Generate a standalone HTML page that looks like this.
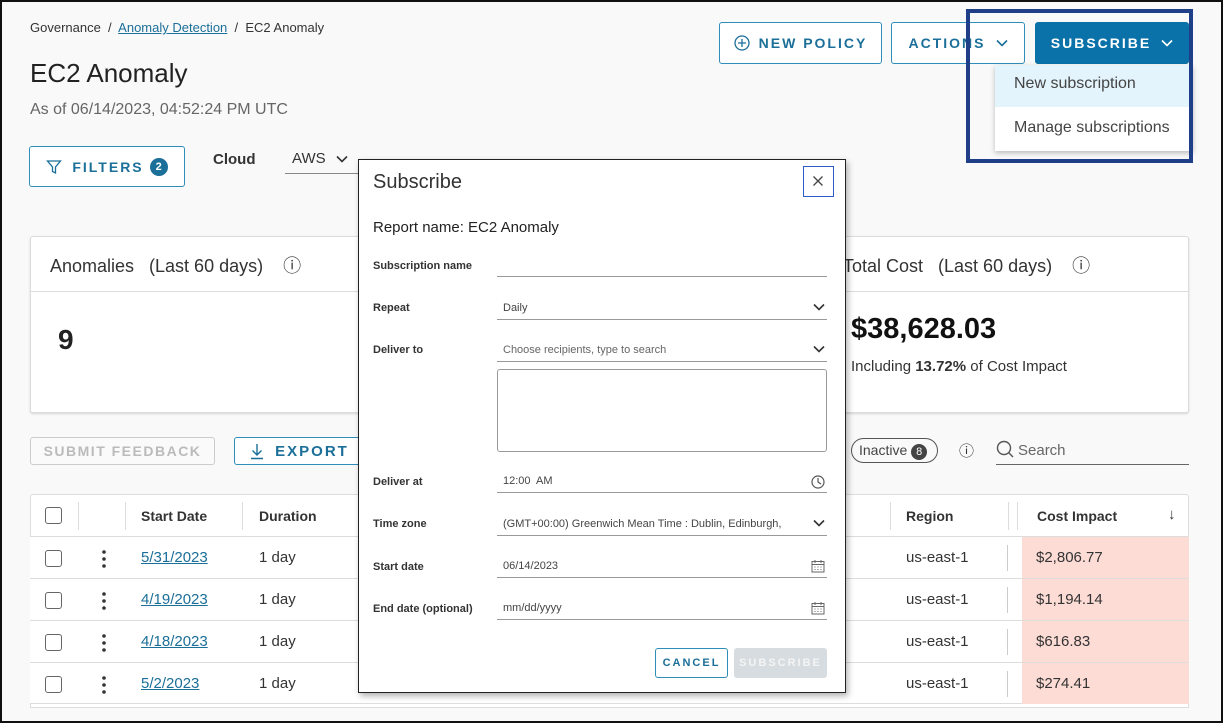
<!DOCTYPE html>
<html><head><meta charset="utf-8"><style>
*{box-sizing:border-box;margin:0;padding:0}
body{width:1228px;height:727px;background:#fff;font-family:"Liberation Sans",sans-serif;color:#333;position:relative;overflow:hidden}
.a{position:absolute}
.frame{left:0;top:0;width:1223px;height:723px;border:2px solid #111;background:#f9f9f9}
.btn{position:absolute;border:1px solid #2f8dba;border-radius:3px;color:#1b6f99;font-weight:bold;letter-spacing:2px;font-size:14px;display:flex;align-items:center;justify-content:center;background:#fff}
.lbl{position:absolute;left:373px;font-size:11px;font-weight:bold;color:#333}
.inp{position:absolute;left:497px;width:330px;border-bottom:1px solid #999;font-size:11px;color:#444;height:22px;padding-left:6px;line-height:20px}
.chev{position:absolute;right:2px;top:5px}
.cb{position:absolute;width:17px;height:17px;border:1.5px solid #666;border-radius:3px;left:45px;background:#fff}
.row{position:absolute;left:30px;width:1159px;height:42px;border-top:1px solid #ddd;background:#fff}
.row .dots{position:absolute;left:72px;top:13px}
.row .d{position:absolute;left:111px;top:12px;font-size:15px;color:#1b6f99;text-decoration:underline}
.row .du{position:absolute;left:229px;top:12px;font-size:15px}
.row .r{position:absolute;left:876px;top:12px;font-size:15px}
.row .c{position:absolute;left:992px;top:0;width:167px;height:41px;background:#fddcd6;padding:12px 0 0 14px;font-size:15px}
.row .sep{position:absolute;left:977px;top:8px;height:26px;border-left:1px solid #ccc}
.th{position:absolute;top:508px;font-size:14px;font-weight:bold;color:#333}
</style></head><body>
<svg width="0" height="0" style="position:absolute"><defs>
<symbol id="cv" viewBox="0 0 12 8"><path d="M1 1.5 L6 6.5 L11 1.5" fill="none" stroke="currentColor" stroke-width="1.6"/></symbol>
<symbol id="cal" viewBox="0 0 14 14"><rect x="1" y="2.5" width="12" height="10.5" fill="none" stroke="#666"/><path d="M1 5.5H13M4 1v3M10 1v3M3.5 8h1M6.5 8h1M9.5 8h1M3.5 10.5h1M6.5 10.5h1M9.5 10.5h1" stroke="#666"/></symbol>
<symbol id="dots" viewBox="0 0 4 18"><circle cx="2" cy="2" r="1.8" fill="#333"/><circle cx="2" cy="9" r="1.8" fill="#333"/><circle cx="2" cy="16" r="1.8" fill="#333"/></symbol>
</defs></svg>
<div class="a frame"></div>
<div class="a" style="left:30px;top:20px;font-size:13px;color:#333">Governance &nbsp;/&nbsp; <span style="color:#1b6f99;text-decoration:underline">Anomaly Detection</span> &nbsp;/&nbsp; EC2 Anomaly</div>
<div class="a" style="left:30px;top:58px;font-size:26px;color:#222">EC2 Anomaly</div>
<div class="a" style="left:30px;top:101px;font-size:16px;color:#666">As of 06/14/2023, 04:52:24 PM UTC</div>
<div class="btn" style="left:29px;top:146px;width:156px;height:41px;border-width:1.5px"><svg width="16" height="16" viewBox="0 0 16 16" style="margin-right:10px"><path d="M1.5 2H14.5L9.5 8V14L6.5 12.5V8Z" fill="none" stroke="#1b6f99" stroke-width="1.3"/></svg>FILTERS <span style="display:inline-block;width:18px;height:18px;border-radius:9px;background:#1b6f99;color:#fff;font-size:11px;letter-spacing:0;text-align:center;line-height:18px;margin-left:6px">2</span></div>
<div class="a" style="left:213px;top:151px;font-size:15px;font-weight:bold">Cloud</div>
<div class="a" style="left:285px;top:150px;width:80px;border-bottom:1px solid #888;font-size:15px;padding:0 0 6px 7px">AWS <svg width="12" height="8" style="margin-left:6px;color:#333"><use href="#cv"/></svg></div>

<div class="btn" style="left:719px;top:22px;width:163px;height:42px"><svg width="16" height="16" viewBox="0 0 16 16" style="margin-right:9px"><circle cx="8" cy="8" r="7" fill="none" stroke="#1b6f99" stroke-width="1.3"/><path d="M8 4V12M4 8H12" stroke="#1b6f99" stroke-width="1.3"/></svg>NEW POLICY</div>
<div class="btn" style="left:891px;top:22px;width:134px;height:42px">ACTIONS <svg width="12" height="8" style="margin-left:10px;color:#1b6f99"><use href="#cv"/></svg></div>
<div class="btn" style="left:1035px;top:22px;width:154px;height:42px;background:#0a72a8;color:#fff;border-color:#0a72a8">SUBSCRIBE <svg width="12" height="8" style="margin-left:10px;color:#fff"><use href="#cv"/></svg></div>
<div class="a" style="left:995px;top:65px;width:198px;height:86px;background:#fff;box-shadow:0 2px 5px rgba(0,0,0,.25)"></div>
<div class="a" style="left:995px;top:65px;width:194px;height:42px;background:#e3f4fc"></div>
<div class="a" style="left:1014px;top:75px;font-size:16px;color:#444">New subscription</div>
<div class="a" style="left:1014px;top:119px;font-size:16px;color:#444">Manage subscriptions</div>
<div class="a" style="left:966px;top:9px;width:227px;height:154px;border:4px solid #1f3f88"></div>

<div class="a" style="left:30px;top:236px;width:1159px;height:177px;background:#fff;border:1px solid #ddd;border-radius:3px;box-shadow:0 1px 2px rgba(0,0,0,.15)"></div>
<div class="a" style="left:30px;top:291px;width:1159px;border-top:1px solid #ddd"></div>
<div class="a" style="left:50px;top:252px;font-size:18px;color:#333">Anomalies &nbsp;&nbsp;(Last 60 days) &nbsp;&nbsp;&nbsp;ⓘ</div>
<div class="a" style="left:58px;top:324px;font-size:28px;font-weight:bold;color:#222">9</div>
<div class="a" style="left:843px;top:252px;font-size:18px;color:#333">Total Cost &nbsp;&nbsp;(Last 60 days) &nbsp;&nbsp;&nbsp;ⓘ</div>
<div class="a" style="left:851px;top:313px;font-size:29px;font-weight:bold;color:#111">$38,628.03</div>
<div class="a" style="left:851px;top:358px;font-size:15px;color:#333">Including <b>13.72%</b> of Cost Impact</div>

<div class="btn" style="left:30px;top:437px;width:185px;height:28px;color:#bbb;border-color:#ccc;background:#fafafa;font-size:14px;letter-spacing:1.5px">SUBMIT FEEDBACK</div>
<div class="btn" style="left:234px;top:437px;width:130px;height:28px;font-size:15px"><svg width="16" height="18" viewBox="0 0 16 18" style="margin-right:10px"><path d="M8 2V13M3.5 8.5L8 13L12.5 8.5M2 16.5H14" fill="none" stroke="#1b6f99" stroke-width="1.4"/></svg>EXPORT</div>
<div class="a" style="left:851px;top:438px;width:87px;height:25px;border:1.5px solid #555;border-radius:13px;font-size:14px;padding:3px 0 0 7px;color:#444">Inactive <span style="display:inline-block;width:16px;height:16px;border-radius:8px;background:#444;color:#fff;font-size:11px;text-align:center;line-height:16px">8</span></div>
<div class="a" style="left:959px;top:440px;font-size:15px">ⓘ</div>
<div class="a" style="left:996px;top:440px;width:193px;height:25px;border-bottom:1.5px solid #666;font-size:15px;color:#666"><svg width="18" height="18" viewBox="0 0 18 18" style="vertical-align:-3px;margin-right:4px"><circle cx="8" cy="8" r="6.5" fill="none" stroke="#555" stroke-width="1.4"/><path d="M12.5 12.5L17 17" stroke="#555" stroke-width="1.4"/></svg>Search</div>

<div class="a" style="left:30px;top:494px;width:1159px;height:214px;background:#fff;border:1px solid #ddd;border-radius:3px 3px 0 0"></div>
<div class="cb" style="top:507px"></div>
<div class="a" style="left:78px;top:502px;height:28px;border-left:1px solid #ddd"></div>
<div class="a" style="left:125px;top:502px;height:28px;border-left:1px solid #ddd"></div>
<div class="a" style="left:242px;top:502px;height:28px;border-left:1px solid #ddd"></div>
<div class="a" style="left:890px;top:502px;height:28px;border-left:1px solid #ddd"></div>
<div class="a" style="left:1008px;top:502px;height:28px;border-left:1px solid #ddd"></div>
<div class="a" style="left:1017px;top:502px;height:28px;border-left:1px solid #ddd"></div>
<div class="th" style="left:141px">Start Date</div>
<div class="th" style="left:259px">Duration</div>
<div class="th" style="left:906px">Region</div>
<div class="th" style="left:1037px">Cost Impact</div>
<div class="a" style="left:1168px;top:506px;font-size:15px">↓</div>

<div class="row" style="top:536px"><div class="cb" style="left:15px;top:13px"></div><svg class="dots" width="4" height="18"><use href="#dots"/></svg><div class="d">5/31/2023</div><div class="du">1 day</div><div class="r">us-east-1</div><div class="sep"></div><div class="c">$2,806.77</div></div>
<div class="row" style="top:578px"><div class="cb" style="left:15px;top:13px"></div><svg class="dots" width="4" height="18"><use href="#dots"/></svg><div class="d">4/19/2023</div><div class="du">1 day</div><div class="r">us-east-1</div><div class="sep"></div><div class="c">$1,194.14</div></div>
<div class="row" style="top:620px"><div class="cb" style="left:15px;top:13px"></div><svg class="dots" width="4" height="18"><use href="#dots"/></svg><div class="d">4/18/2023</div><div class="du">1 day</div><div class="r">us-east-1</div><div class="sep"></div><div class="c">$616.83</div></div>
<div class="row" style="top:662px;border-bottom:1px solid #ddd"><div class="cb" style="left:15px;top:13px"></div><svg class="dots" width="4" height="18"><use href="#dots"/></svg><div class="d">5/2/2023</div><div class="du">1 day</div><div class="r">us-east-1</div><div class="sep"></div><div class="c">$274.41</div></div>

<!-- modal -->
<div class="a" style="left:358px;top:159px;width:488px;height:534px;background:#fff;border:1.5px solid #222;box-shadow:2px 3px 6px rgba(0,0,0,.3)"></div>
<div class="a" style="left:373px;top:171px;font-size:20px;color:#333">Subscribe</div>
<div class="a" style="left:803px;top:166px;width:31px;height:31px;border:1.5px solid #2a5bc9"><svg width="28" height="28" viewBox="0 0 28 28"><path d="M9.5 9.5L18.5 18.5M18.5 9.5L9.5 18.5" stroke="#444" stroke-width="1.3"/></svg></div>
<div class="a" style="left:373px;top:219px;font-size:15px;color:#222">Report name: EC2 Anomaly</div>
<div class="lbl" style="top:260px">Subscription name</div><div class="inp" style="top:255px"></div>
<div class="lbl" style="top:302px">Repeat</div><div class="inp" style="top:298px">Daily<svg class="chev" width="12" height="8" style="color:#333"><use href="#cv"/></svg></div>
<div class="lbl" style="top:344px">Deliver to</div><div class="inp" style="top:340px;color:#666">Choose recipients, type to search<svg class="chev" width="12" height="8" style="color:#333"><use href="#cv"/></svg></div>
<div class="a" style="left:497px;top:369px;width:330px;height:83px;border:1px solid #999;border-radius:3px"></div>
<div class="lbl" style="top:476px">Deliver at</div><div class="inp" style="top:471px">12:00&nbsp; AM<svg class="chev" width="14" height="14" viewBox="0 0 14 14" style="top:4px"><circle cx="7" cy="7" r="6" fill="none" stroke="#555" stroke-width="1.2"/><path d="M7 3V7L10 9" fill="none" stroke="#555" stroke-width="1.2"/></svg></div>
<div class="lbl" style="top:518px">Time zone</div><div class="inp" style="top:514px">(GMT+00:00) Greenwich Mean Time : Dublin, Edinburgh,<svg class="chev" width="12" height="8" style="color:#333"><use href="#cv"/></svg></div>
<div class="lbl" style="top:561px">Start date</div><div class="inp" style="top:556px">06/14/2023<svg class="chev" width="14" height="14" style="top:3px"><use href="#cal"/></svg></div>
<div class="lbl" style="top:603px">End date (optional)</div><div class="inp" style="top:598px">mm/dd/yyyy<svg class="chev" width="14" height="14" style="top:3px"><use href="#cal"/></svg></div>
<div class="btn" style="left:655px;top:648px;width:73px;height:30px;font-size:11px">CANCEL</div>
<div class="btn" style="left:734px;top:648px;width:93px;height:30px;font-size:11px;background:#d6dce0;border-color:#d6dce0;color:#f4f4f4">SUBSCRIBE</div>
</body></html>
